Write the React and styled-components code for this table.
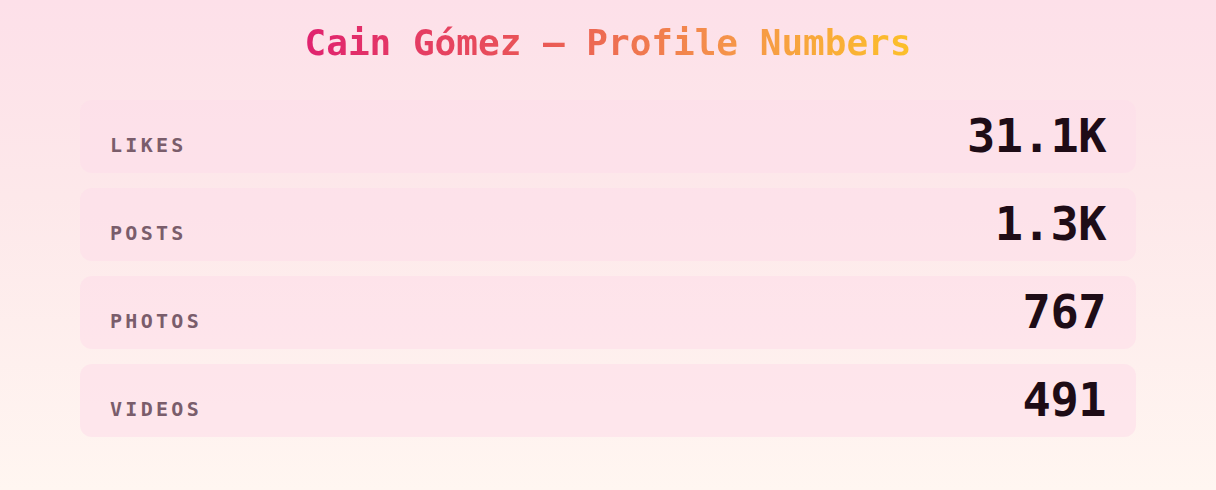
import React from "react";
import styled, { createGlobalStyle } from "styled-components";

const STATS = [
  { label: "Likes", value: "31.1K" },
  { label: "Posts", value: "1.3K" },
  { label: "Photos", value: "767" },
  { label: "Videos", value: "491" },
];

const GlobalStyle = createGlobalStyle`
  html, body {
    margin: 0;
    padding: 0;
  }
  body {
    font-family: "DejaVu Sans Mono", "Liberation Mono", monospace;
  }
`;

const Page = styled.div`
  min-height: 100vh;
  box-sizing: border-box;
  padding: 21px 80px 40px;
  background: linear-gradient(180deg, #fde0e9 0%, #fde8ea 40%, #fff6f1 100%);
  display: flex;
  flex-direction: column;
  align-items: stretch;
  gap: 36px;
`;

const Title = styled.h1`
  margin: 0;
  align-self: center;
  font-size: 36px;
  line-height: 43px;
  font-weight: 700;
  background: linear-gradient(90deg, #e0226f 0%, #ea5a55 40%, #f5944a 70%, #fcc02a 100%);
  -webkit-background-clip: text;
  background-clip: text;
  color: transparent;
`;

const List = styled.div`
  display: flex;
  flex-direction: column;
  gap: 15px;
`;

const Row = styled.div`
  display: flex;
  justify-content: space-between;
  align-items: baseline;
  padding: 13px 30px 14px;
  border-radius: 12px;
  background: rgba(253, 222, 234, 0.6);
`;

const Label = styled.span`
  font-size: 20px;
  font-weight: 700;
  letter-spacing: 3.3px;
  text-transform: uppercase;
  color: #7a5d6b;
`;

const Value = styled.span`
  font-size: 47px;
  line-height: 46px;
  font-weight: 700;
  letter-spacing: -0.5px;
  color: #1e0c16;
`;

export default function App() {
  return (
    <>
      <GlobalStyle />
      <Page>
        <Title>Cain Gómez — Profile Numbers</Title>
        <List>
          {STATS.map((s) => (
            <Row key={s.label}>
              <Label>{s.label}</Label>
              <Value>{s.value}</Value>
            </Row>
          ))}
        </List>
      </Page>
    </>
  );
}
